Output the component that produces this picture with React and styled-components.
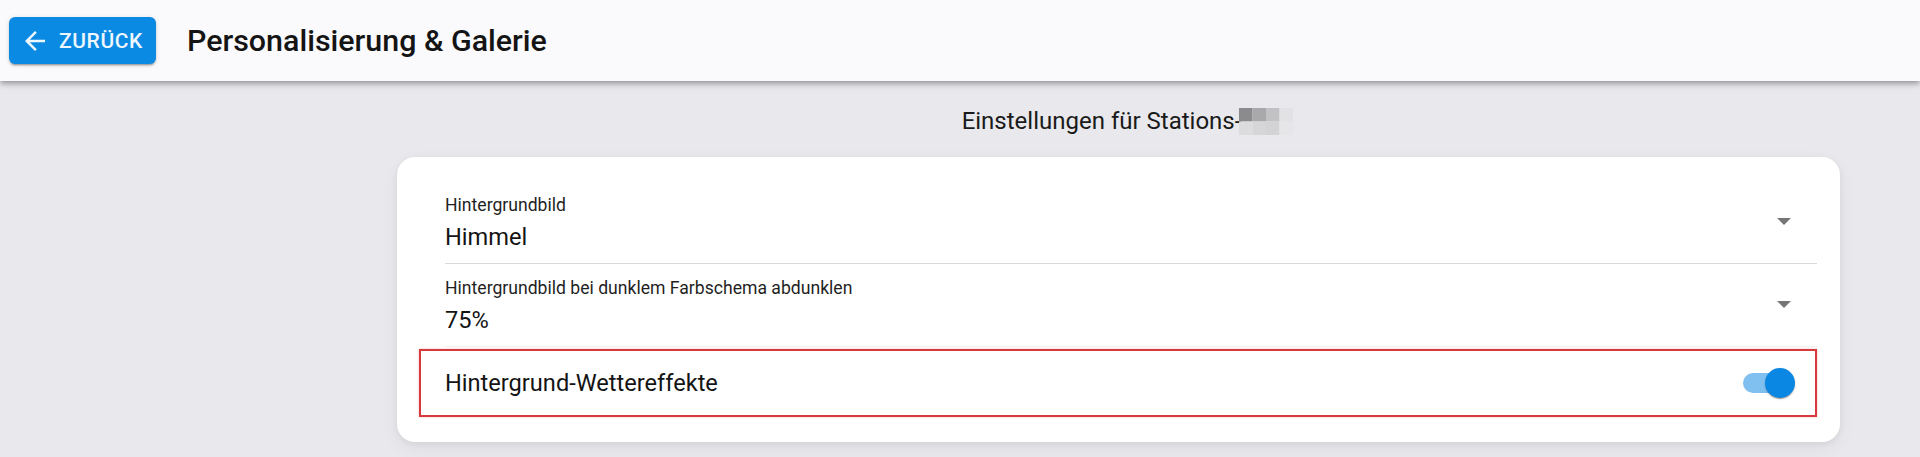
import React from "react";
import styled, { createGlobalStyle } from "styled-components";

const GlobalStyle = createGlobalStyle`
  html, body {
    margin: 0;
    padding: 0;
    background: #e9e9ed;
    font-family: Roboto, "Liberation Sans", sans-serif;
  }
`;

const Page = styled.div`
  min-height: 457px;
  background: #e9e9ed;
`;

const Header = styled.header`
  height: 81px;
  display: flex;
  align-items: center;
  padding-left: 9px;
  background: #fafafc;
  box-shadow: 0 2px 4px -1px rgba(0,0,0,.2), 0 4px 5px 0 rgba(0,0,0,.14), 0 1px 10px 0 rgba(0,0,0,.12);
  position: relative;
  z-index: 2;
`;

const BackButton = styled.button`
  height: 47px;
  width: 147px;
  display: flex;
  align-items: center;
  gap: 9px;
  padding: 0 0 0 11px;
  border: none;
  border-radius: 6px;
  background: #0b8ae4;
  color: #eef7fe;
  font-family: Roboto, "Liberation Sans", sans-serif;
  font-weight: 500;
  font-size: 21px;
  letter-spacing: 0.6px;
  box-shadow: 0 3px 1px -2px rgba(0,0,0,.2), 0 2px 2px 0 rgba(0,0,0,.14), 0 1px 5px 0 rgba(0,0,0,.12);
  svg { width: 30px; height: 30px; flex: none; }
`;

const Title = styled.h1`
  margin: 0 0 0 31px;
  font-size: 30.4px;
  font-weight: 500;
  color: #141414;
  letter-spacing: 0;
`;

const Content = styled.main`
  padding: 26px 80px 16px 397px;
  display: flex;
  flex-direction: column;
`;

const Subtitle = styled.div`
  align-self: center;
  display: flex;
  align-items: center;
  font-size: 24px;
  line-height: 28px;
  color: #1a1a1a;
  margin-left: 18px;
  svg { display: block; margin-left: -2px; }
`;

const Card = styled.section`
  margin-top: 22px;
  background: #fff;
  border-radius: 18px;
  padding: 24px 23px 25px 22px;
  box-shadow: 0 2px 6px rgba(0,0,0,.06), 0 6px 18px rgba(0,0,0,.05);
`;

const SelectRow = styled.div`
  padding-left: 26px;
`;

const Field = styled.div`
  display: flex;
  align-items: center;
  padding: 14px 26px 12px 0;
  border-bottom: 1px solid ${p => (p.$faint ? "#f1f1f3" : "#d9d9dc")};
`;

const FieldText = styled.div`
  flex: 1;
  display: flex;
  flex-direction: column;
`;

const Label = styled.div`
  font-size: 17.6px;
  line-height: 21px;
  color: #1f1f1f;
`;

const Value = styled.div`
  margin-top: 7px;
  font-size: 23.6px;
  line-height: 28px;
  color: #141414;
`;

const Arrow = styled.div`
  width: 0;
  height: 0;
  border-left: 7px solid transparent;
  border-right: 7px solid transparent;
  border-top: 7px solid #767676;
  margin-top: -4px;
`;

const ToggleRow = styled.div`
  margin-top: 2px;
  display: flex;
  align-items: center;
  justify-content: space-between;
  padding: 17px 20px 17px 24px;
  border: 2px solid #d63a3d;
  box-shadow: 0 0 2px rgba(214, 58, 61, .35);
`;

const ToggleLabel = styled.div`
  font-size: 23.6px;
  line-height: 28px;
  color: #141414;
`;

const Switch = styled.div`
  position: relative;
  width: 52px;
  height: 30px;
`;

const Track = styled.span`
  position: absolute;
  left: 0;
  top: 5px;
  width: 47px;
  height: 20px;
  border-radius: 10px;
  background: ${p => (p.$on ? "#7fc0f1" : "#bdbdbd")};
`;

const Thumb = styled.span`
  position: absolute;
  top: 0;
  left: ${p => (p.$on ? "22px" : "0")};
  width: 30px;
  height: 30px;
  border-radius: 50%;
  background: ${p => (p.$on ? "#0a87e2" : "#fafafa")};
  box-shadow: 0 2px 1px -1px rgba(0,0,0,.2), 0 1px 1px 0 rgba(0,0,0,.14), 0 1px 3px 0 rgba(0,0,0,.12);
`;

const ArrowBack = () => (
  <svg viewBox="0 0 24 24" fill="currentColor">
    <path d="M20 11H7.83l5.59-5.59L12 4l-8 8 8 8 1.41-1.41L7.83 13H20v-2z" />
  </svg>
);

const Pixelated = () => {
  const cells = [
    ["#8b8b8d", "#a9a9ab", "#c2c2c4", "#e2e2e4"],
    ["#dcdcde", "#d6d6d8", "#d3d3d5", "#e6e6e8"],
  ];
  return (
    <svg width="54" height="27" viewBox="0 0 54 27">
      {cells.map((row, r) =>
        row.map((c, i) => (
          <rect key={r + "-" + i} x={i * 13.5} y={r * 13.5} width="13.5" height="13.5" fill={c} />
        ))
      )}
    </svg>
  );
};

const SelectField = ({ label, value, faint }) => (
  <SelectRow>
    <Field $faint={faint}>
      <FieldText>
        <Label>{label}</Label>
        <Value>{value}</Value>
      </FieldText>
      <Arrow />
    </Field>
  </SelectRow>
);

export default function App() {
  return (
    <Page>
      <GlobalStyle />
      <Header>
        <BackButton>
          <ArrowBack />
          ZURÜCK
        </BackButton>
        <Title>Personalisierung &amp; Galerie</Title>
      </Header>
      <Content>
        <Subtitle>
          Einstellungen für Stations-
          <Pixelated />
        </Subtitle>
        <Card>
          <SelectField label="Hintergrundbild" value="Himmel" />
          <SelectField label="Hintergrundbild bei dunklem Farbschema abdunklen" value="75%" faint />
          <ToggleRow>
            <ToggleLabel>Hintergrund-Wettereffekte</ToggleLabel>
            <Switch>
              <Track $on />
              <Thumb $on />
            </Switch>
          </ToggleRow>
        </Card>
      </Content>
    </Page>
  );
}
